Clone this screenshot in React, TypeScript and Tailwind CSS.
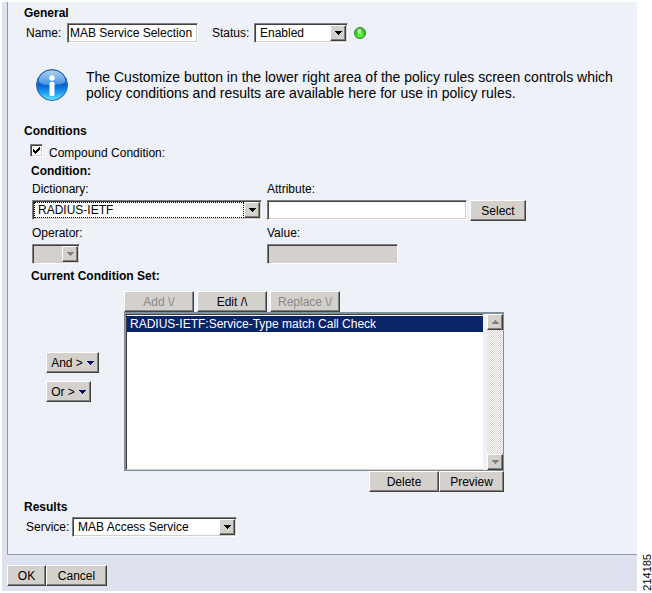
import type { ReactNode } from "react";

const sunken =
  "border border-t-[#808080] border-l-[#808080] border-r-white border-b-white shadow-[inset_1px_1px_0_#404040,inset_-1px_-1px_0_#d4d0c8]";

const raised =
  "border border-t-white border-l-white border-r-[#404040] border-b-[#404040] bg-[#d4d0cb] shadow-[inset_-1px_-1px_0_#808080]";

type ArrowProps = {
  up?: boolean;
  color?: string;
};

function Arrow({ up = false, color = "#000" }: ArrowProps) {
  return (
    <svg width="7" height="4" viewBox="0 0 7 4" shapeRendering="crispEdges">
      <path d={up ? "M3 0h1v1h1v1h1v1h1v1H0V3h1V2h1V1h1z" : "M0 0h7v1H6v1H5v1H4v1H3V3H2V2H1V1H0z"} fill={color} />
    </svg>
  );
}

type ButtonProps = {
  children: ReactNode;
  className: string;
  disabled?: boolean;
};

function Button({ children, className, disabled }: ButtonProps) {
  return (
    <button
      type="button"
      disabled={disabled}
      className={`flex h-[21px] shrink-0 items-center justify-center gap-1 whitespace-nowrap disabled:text-[#8a8a8a] ${raised} ${className}`}
    >
      {children}
    </button>
  );
}

type DropDownProps = {
  id: string;
  options: string[];
  className: string;
  disabled?: boolean;
  focused?: boolean;
};

function DropDown({ id, options, className, disabled, focused }: DropDownProps) {
  return (
    <div className={`relative h-5 shrink-0 ${className}`}>
      <select
        id={id}
        disabled={disabled}
        className={`block h-full w-full appearance-none bg-white pr-5 pl-[5px] text-black outline-none disabled:bg-[#d4d0cb] disabled:opacity-100 ${sunken}`}
      >
        {options.map((option) => (
          <option key={option}>{option}</option>
        ))}
      </select>
      {focused && (
        <span className="pointer-events-none absolute top-0.5 right-[18px] bottom-0.5 left-0.5 border border-dotted border-black" />
      )}
      <span
        className={`pointer-events-none absolute top-0.5 right-0.5 bottom-0.5 flex w-4 items-center justify-center ${raised}`}
      >
        <Arrow color={disabled ? "#808080" : "#000"} />
      </span>
    </div>
  );
}

function InfoIcon() {
  return (
    <svg className="shrink-0" width="32" height="32" viewBox="0 0 32 32" aria-hidden="true">
      <defs>
        <linearGradient id="info-ball" x1="0" y1="0" x2="0" y2="1">
          <stop offset="0" stopColor="#2d7fd6" />
          <stop offset="0.5" stopColor="#0a62cf" />
          <stop offset="0.75" stopColor="#1e9df0" />
          <stop offset="1" stopColor="#6fe6ff" />
        </linearGradient>
        <linearGradient id="info-gloss" x1="0" y1="0" x2="0" y2="1">
          <stop offset="0" stopColor="#d3e6f8" />
          <stop offset="1" stopColor="#4d9be6" />
        </linearGradient>
      </defs>
      <circle cx="16" cy="16" r="15.5" fill="url(#info-ball)" stroke="#2468ad" />
      <path d="M16 1.5C9 1.5 3.5 6 2.5 12c2 3.500 7 4.500 13.500 4s11.500-.5 13.500-4C28.500 6 23 1.500 16 1.500z" fill="url(#info-gloss)" opacity="0.8" />
      <circle cx="16" cy="9" r="2.7" fill="#fff" />
      <rect x="13.500" y="13" width="5" height="14" rx="1.500" fill="#fff" />
    </svg>
  );
}

function StatusLight() {
  return (
    <svg className="ml-1.5 shrink-0" width="12" height="12" viewBox="0 0 12 12" role="img" aria-label="Enabled">
      <circle cx="6" cy="6" r="5.5" fill="#35c921" stroke="#3f8040" />
      <circle cx="6" cy="7.500" r="3" fill="#5ff043" />
      <circle cx="5.500" cy="4" r="2" fill="#c9fbbd" />
    </svg>
  );
}

function ConditionList() {
  return (
    <div className="flex h-[159px] border-t-2 border-b border-l-2 border-[#7f9099]">
      <ul
        role="listbox"
        aria-label="Current Condition Set"
        className="flex-1 border-t border-b border-l border-t-[#404040] border-b-[#d4d0cb] border-l-[#404040] bg-white pt-px"
      >
        <li role="option" aria-selected="true" className="h-4 bg-[#0a246a] pl-[3px] leading-4 text-white">
          RADIUS-IETF:Service-Type match Call Check
        </li>
      </ul>
      <div className="ml-1 flex w-[17px] flex-col border-r border-[#7f9099] bg-[repeating-conic-gradient(#fff_0_25%,#d4d0cb_0_50%)] bg-size-[2px_2px]">
        <button type="button" disabled aria-label="Scroll up" className={`flex h-4 items-center justify-center ${raised}`}>
          <Arrow up color="#808080" />
        </button>
        <button type="button" disabled aria-label="Scroll down" className={`mt-auto flex h-4 items-center justify-center ${raised}`}>
          <Arrow color="#808080" />
        </button>
      </div>
    </div>
  );
}

export default function App() {
  return (
    <div className="flex bg-white pt-0.5 pl-0.5 font-['Liberation_Sans',Arial,sans-serif] text-[12px] leading-4 text-black">
      <form className="min-w-0 flex-1 bg-[#dee2ee] pb-[5px] pl-[5px]">
        <div className="border-b border-l border-b-[#8b9cab] border-l-[#8b9cab] bg-[#eef1f7] pt-[3px] pb-[17px] pl-4">
          <section>
            <h2 className="font-bold">General</h2>
            <div className="mt-0.5 flex items-center pl-0.5">
              <label htmlFor="name" className="w-[41px]">Name:</label>
              <input id="name" defaultValue="MAB Service Selection" className={`h-5 w-[131px] bg-white pl-0.5 ${sunken}`} />
              <label htmlFor="status" className="ml-3.5 w-[42px]">Status:</label>
              <DropDown id="status" options={["Enabled", "Disabled"]} className="w-[94px]" />
              <StatusLight />
            </div>
          </section>

          <div className="mt-[26px] flex items-center gap-[18px] pr-3 pl-3">
            <InfoIcon />
            <p className="text-[14px] leading-4">
              The Customize button in the lower right area of the policy rules screen controls which policy conditions and results are available here for use in policy rules.
            </p>
          </div>

          <section className="mt-[22px]">
            <h2 className="font-bold">Conditions</h2>
            <div className="mt-1 flex items-start pl-1.5">
              <span className="relative mt-px mr-1.5 size-[13px]">
                <input id="compound" type="checkbox" defaultChecked className={`peer block size-[13px] appearance-none bg-white ${sunken}`} />
                <svg className="pointer-events-none absolute top-[3px] left-[3px] hidden peer-checked:block" width="7" height="7" viewBox="0 0 7 7" shapeRendering="crispEdges">
                  <path d="M0 2h1v1h1v1h1V3h1V2h1V1h1V0h1v3H6v1H5v1H4v1H3v1H2V6H1V5H0z" fill="#000" />
                </svg>
              </span>
              <label htmlFor="compound" className="pt-0.5">Compound Condition:</label>
            </div>

            <div className="pl-[7px]">
              <h3 className="mt-0.5 font-bold">Condition:</h3>
              <div className="mt-0.5 flex">
                <div className="w-[235px] pl-px">
                  <label htmlFor="dictionary" className="block">Dictionary:</label>
                  <div className="mt-[3px]">
                    <DropDown id="dictionary" options={["RADIUS-IETF"]} className="w-[230px]" focused />
                  </div>
                  <label htmlFor="operator" className="mt-[5px] block">Operator:</label>
                  <div className="mt-[3px]">
                    <DropDown id="operator" options={[""]} className="w-12" disabled />
                  </div>
                </div>
                <div className="pl-px">
                  <label htmlFor="attribute" className="block">Attribute:</label>
                  <div className="mt-[3px] flex h-5 gap-[3px]">
                    <input id="attribute" className={`h-5 w-[200px] bg-white pl-0.5 ${sunken}`} />
                    <Button className="w-14">Select</Button>
                  </div>
                  <label htmlFor="value" className="mt-[5px] block">Value:</label>
                  <input id="value" disabled className={`mt-[3px] block h-5 w-[131px] bg-[#d4d0cb] pl-0.5 ${sunken}`} />
                </div>
              </div>

              <h3 className="mt-1 font-bold">Current Condition Set:</h3>
              <div className="mt-[7px] flex">
                <div className="flex w-[93px] flex-col items-start gap-2 pt-[61px] pl-[15px]">
                  <Button className="w-[53px]">And &gt; <Arrow color="#0a0a6a" /></Button>
                  <Button className="w-[45px]">Or &gt; <Arrow color="#0a0a6a" /></Button>
                </div>
                <div className="w-[380px]">
                  <div className="flex gap-[3px]">
                    <Button className="w-[70px]" disabled>Add \/</Button>
                    <Button className="w-[70px]">Edit /\</Button>
                    <Button className="w-[70px]" disabled>Replace \/</Button>
                  </div>
                  <ConditionList />
                  <div className="flex justify-end">
                    <Button className="w-[70px]">Delete</Button>
                    <Button className="w-[65px]">Preview</Button>
                  </div>
                </div>
              </div>
            </div>
          </section>

          <section className="mt-[7px]">
            <h2 className="font-bold">Results</h2>
            <div className="mt-0.5 flex items-center pl-0.5">
              <label htmlFor="service" className="w-[46px]">Service:</label>
              <DropDown id="service" options={["MAB Access Service"]} className="w-[165px]" />
            </div>
          </section>
        </div>

        <div className="mt-2.5 flex">
          <Button className="w-[39px]">OK</Button>
          <Button className="w-[61px]">Cancel</Button>
        </div>
      </form>
      <aside className="flex w-[15px] shrink-0 items-end justify-end">
        <span className="rotate-180 text-[11px] leading-2.5 [writing-mode:vertical-rl]">214185</span>
      </aside>
    </div>
  );
}
